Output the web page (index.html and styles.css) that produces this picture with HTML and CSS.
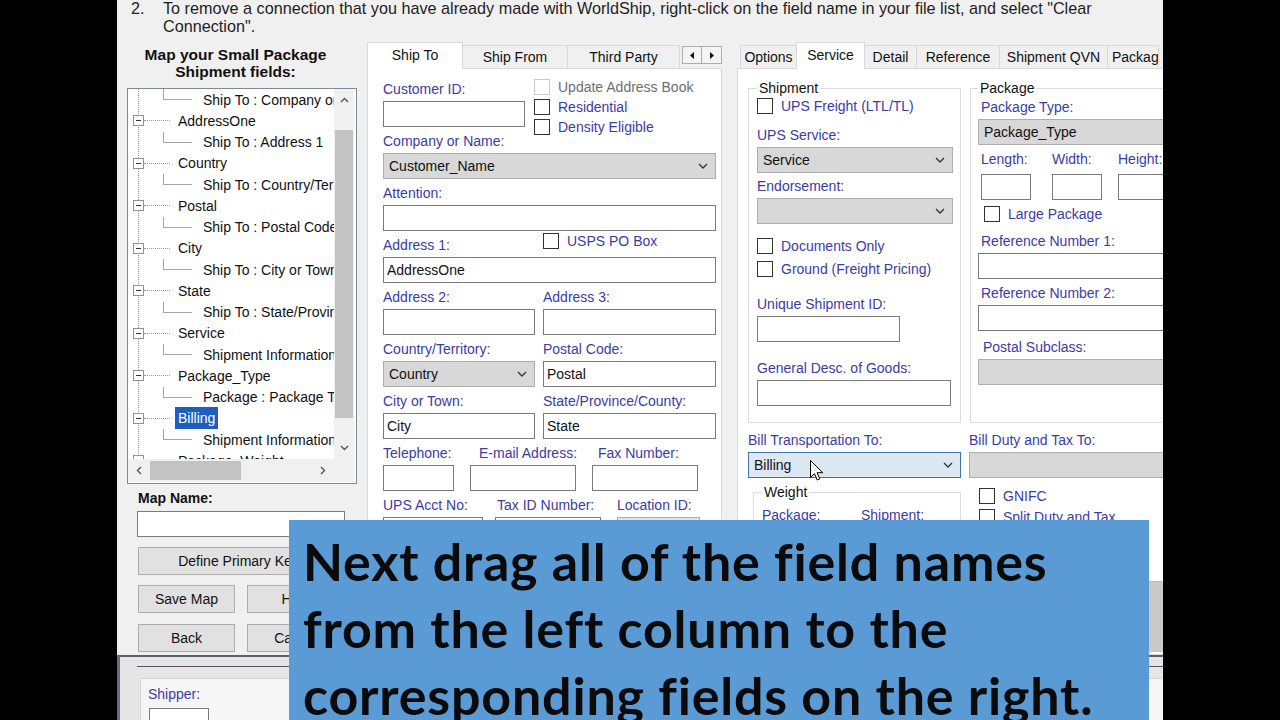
FILE: index.html
```html
<!DOCTYPE html>
<html lang="en">
<head>
    <meta charset="UTF-8">
    <title>WorldShip - Import Map</title>
    <link rel="stylesheet" href="styles.css">
</head>
<body>
<div class="screen">
    <div class="frame">
        <div class="intro">
            <span class="intro-num">2.</span>
            <p class="intro-text">To remove a connection that you have already made with WorldShip, right-click on the field name in your file list, and select "Clear<br>Connection".</p>
        </div>

        <div class="main">
            <!-- left column: source fields tree -->
            <div class="mapper">
                <div class="mapper-title">Map your Small Package<br>Shipment fields:</div>
                <div class="tree">
                    <div class="tree-list">
                        <div class="leaf"><span class="elbow"></span><span class="tree-label">Ship To : Company or Name</span></div>
                        <div class="node"><span class="toggle"></span><span class="branch"></span><span class="tree-label">AddressOne</span></div>
                        <div class="leaf"><span class="elbow"></span><span class="tree-label">Ship To : Address 1</span></div>
                        <div class="node"><span class="toggle"></span><span class="branch"></span><span class="tree-label">Country</span></div>
                        <div class="leaf"><span class="elbow"></span><span class="tree-label">Ship To : Country/Territory</span></div>
                        <div class="node"><span class="toggle"></span><span class="branch"></span><span class="tree-label">Postal</span></div>
                        <div class="leaf"><span class="elbow"></span><span class="tree-label">Ship To : Postal Code</span></div>
                        <div class="node"><span class="toggle"></span><span class="branch"></span><span class="tree-label">City</span></div>
                        <div class="leaf"><span class="elbow"></span><span class="tree-label">Ship To : City or Town</span></div>
                        <div class="node"><span class="toggle"></span><span class="branch"></span><span class="tree-label">State</span></div>
                        <div class="leaf"><span class="elbow"></span><span class="tree-label">Ship To : State/Province/County</span></div>
                        <div class="node"><span class="toggle"></span><span class="branch"></span><span class="tree-label">Service</span></div>
                        <div class="leaf"><span class="elbow"></span><span class="tree-label">Shipment Information : Service</span></div>
                        <div class="node"><span class="toggle"></span><span class="branch"></span><span class="tree-label">Package_Type</span></div>
                        <div class="leaf"><span class="elbow"></span><span class="tree-label">Package : Package Type</span></div>
                        <div class="node"><span class="toggle"></span><span class="branch"></span><span class="tree-label selected">Billing</span></div>
                        <div class="leaf"><span class="elbow"></span><span class="tree-label">Shipment Information : Bill Transportation To</span></div>
                        <div class="node"><span class="toggle"></span><span class="branch"></span><span class="tree-label">Package_Weight</span></div>
                    </div>
                    <div class="vscroll">
                        <span class="sb-arrow"><svg width="9" height="6" viewBox="0 0 9 6"><path d="M1 5l3.5-3.5L8 5" fill="none" stroke="#555" stroke-width="1.4"/></svg></span>
                        <span class="vthumb"></span>
                        <span class="sb-arrow sb-end"><svg width="9" height="6" viewBox="0 0 9 6"><path d="M1 1l3.5 3.5L8 1" fill="none" stroke="#555" stroke-width="1.4"/></svg></span>
                    </div>
                    <div class="hscroll">
                        <span class="sb-arrow"><svg width="6" height="9" viewBox="0 0 6 9"><path d="M5 1L1.5 4.5 5 8" fill="none" stroke="#555" stroke-width="1.4"/></svg></span>
                        <span class="hthumb"></span>
                        <span class="sb-arrow sb-end"><svg width="6" height="9" viewBox="0 0 6 9"><path d="M1 1l3.5 3.5L1 8" fill="none" stroke="#555" stroke-width="1.4"/></svg></span>
                    </div>
                    <div class="corner"></div>
                </div>
                <div class="map-name">Map Name:</div>
                <div class="tb map-input"></div>
                <button class="btn btn-wide">Define Primary Keys</button>
                <div class="btn-row">
                    <button class="btn">Save Map</button>
                    <button class="btn">Help</button>
                </div>
                <div class="btn-row btn-row-last">
                    <button class="btn">Back</button>
                    <button class="btn">Cancel</button>
                </div>
            </div>

            <!-- middle: ship to / ship from -->
            <div class="tabctl ship-tabs">
                <div class="tabstrip">
                    <div class="tab active t-shipto">Ship To</div>
                    <div class="tab t-shipfrom">Ship From</div>
                    <div class="tab t-third">Third Party</div>
                    <div class="tab-arrows">
                        <span class="arrow-btn"><svg width="4" height="7" viewBox="0 0 4 7"><path d="M4 0v7L0 3.5z" fill="#111"/></svg></span>
                        <span class="arrow-btn"><svg width="4" height="7" viewBox="0 0 4 7"><path d="M0 0v7l4-3.5z" fill="#111"/></svg></span>
                    </div>
                </div>
                <div class="tabpage ship-page">
                    <div class="cust-row">
                        <div class="field">
                            <span class="lbl">Customer ID:</span>
                            <div class="tb cust-id"></div>
                        </div>
                        <div class="checklist">
                            <div class="check disabled"><span class="box"></span><span class="txt">Update Address Book</span></div>
                            <div class="check"><span class="box"></span><span class="txt">Residential</span></div>
                            <div class="check"><span class="box"></span><span class="txt">Density Eligible</span></div>
                        </div>
                    </div>
                    <div class="field">
                        <span class="lbl">Company or Name:</span>
                        <div class="combo"><span>Customer_Name</span><svg class="chev" width="10" height="6" viewBox="0 0 10 6"><path d="M1 1l4 4 4-4" fill="none" stroke="#333" stroke-width="1.3"/></svg></div>
                    </div>
                    <div class="field">
                        <span class="lbl">Attention:</span>
                        <div class="tb"></div>
                    </div>
                    <div class="field">
                        <div class="addr1-head">
                            <span class="lbl">Address 1:</span>
                            <div class="check po-box"><span class="box"></span><span class="txt">USPS PO Box</span></div>
                        </div>
                        <div class="tb">AddressOne</div>
                    </div>
                    <div class="pair">
                        <div class="field"><span class="lbl">Address 2:</span><div class="tb"></div></div>
                        <div class="field"><span class="lbl">Address 3:</span><div class="tb"></div></div>
                    </div>
                    <div class="pair">
                        <div class="field">
                            <span class="lbl">Country/Territory:</span>
                            <div class="combo"><span>Country</span><svg class="chev" width="10" height="6" viewBox="0 0 10 6"><path d="M1 1l4 4 4-4" fill="none" stroke="#333" stroke-width="1.3"/></svg></div>
                        </div>
                        <div class="field"><span class="lbl">Postal Code:</span><div class="tb">Postal</div></div>
                    </div>
                    <div class="pair">
                        <div class="field"><span class="lbl">City or Town:</span><div class="tb">City</div></div>
                        <div class="field"><span class="lbl">State/Province/County:</span><div class="tb">State</div></div>
                    </div>
                    <div class="tel-row">
                        <div class="field"><span class="lbl">Telephone:</span><div class="tb w71"></div></div>
                        <div class="field"><span class="lbl pad9">E-mail Address:</span><div class="tb w106"></div></div>
                        <div class="field"><span class="lbl pad6">Fax Number:</span><div class="tb w106"></div></div>
                    </div>
                    <div class="acct-row">
                        <div class="field"><span class="lbl">UPS Acct No:</span><div class="tb w100"></div></div>
                        <div class="field"><span class="lbl pad2">Tax ID Number:</span><div class="tb w106"></div></div>
                        <div class="field"><span class="lbl">Location ID:</span><div class="tb tb-grey w83"></div></div>
                    </div>
                </div>
            </div>

            <!-- right: service options -->
            <div class="tabctl service-tabs">
                <div class="tabstrip strip-right">
                    <div class="tab t-options">Options</div>
                    <div class="tab active t-service">Service</div>
                    <div class="tab t-detail">Detail</div>
                    <div class="tab t-reference">Reference</div>
                    <div class="tab t-qvn">Shipment QVN</div>
                    <div class="tab t-package">Package</div>
                </div>
                <div class="tabpage service-page">
                    <div class="group-row">
                        <fieldset class="group shipment-group">
                            <legend>Shipment</legend>
                            <div class="check"><span class="box"></span><span class="txt">UPS Freight (LTL/TL)</span></div>
                            <span class="lbl sp-ups">UPS Service:</span>
                            <div class="combo w196"><span>Service</span><svg class="chev" width="10" height="6" viewBox="0 0 10 6"><path d="M1 1l4 4 4-4" fill="none" stroke="#333" stroke-width="1.3"/></svg></div>
                            <span class="lbl sp-endorse">Endorsement:</span>
                            <div class="combo w196"><span></span><svg class="chev" width="10" height="6" viewBox="0 0 10 6"><path d="M1 1l4 4 4-4" fill="none" stroke="#333" stroke-width="1.3"/></svg></div>
                            <div class="check check-tall sp-docs"><span class="box"></span><span class="txt">Documents Only</span></div>
                            <div class="check check-tall"><span class="box"></span><span class="txt">Ground (Freight Pricing)</span></div>
                            <span class="lbl sp-unique">Unique Shipment ID:</span>
                            <div class="tb w143"></div>
                            <span class="lbl sp-desc">General Desc. of Goods:</span>
                            <div class="tb w194"></div>
                        </fieldset>
                        <fieldset class="group package-group">
                            <legend>Package</legend>
                            <span class="lbl pad3 sp-ptype">Package Type:</span>
                            <div class="combo"><span>Package_Type</span><svg class="chev" width="10" height="6" viewBox="0 0 10 6"><path d="M1 1l4 4 4-4" fill="none" stroke="#333" stroke-width="1.3"/></svg></div>
                            <div class="dims">
                                <div class="field"><span class="lbl">Length:</span><div class="tb w50"></div></div>
                                <div class="field"><span class="lbl">Width:</span><div class="tb w50"></div></div>
                                <div class="field"><span class="lbl">Height:</span><div class="tb w50"></div></div>
                            </div>
                            <div class="check large-pkg"><span class="box"></span><span class="txt">Large Package</span></div>
                            <span class="lbl pad3 sp-ref1">Reference Number 1:</span>
                            <div class="tb"></div>
                            <span class="lbl pad3 sp-ref2">Reference Number 2:</span>
                            <div class="tb"></div>
                            <span class="lbl pad5 sp-subclass">Postal Subclass:</span>
                            <div class="combo"><span></span><svg class="chev" width="10" height="6" viewBox="0 0 10 6"><path d="M1 1l4 4 4-4" fill="none" stroke="#333" stroke-width="1.3"/></svg></div>
                        </fieldset>
                    </div>
                    <div class="bill-row">
                        <div class="bill-col">
                            <span class="lbl">Bill Transportation To:</span>
                            <div class="combo focus"><span>Billing</span><svg class="chev" width="10" height="6" viewBox="0 0 10 6"><path d="M1 1l4 4 4-4" fill="none" stroke="#333" stroke-width="1.3"/></svg></div>
                            <fieldset class="group weight-group">
                                <legend>Weight</legend>
                                <div class="weight-labels">
                                    <span class="lbl">Package:</span>
                                    <span class="lbl">Shipment:</span>
                                </div>
                            </fieldset>
                        </div>
                        <div class="bill-col">
                            <span class="lbl">Bill Duty and Tax To:</span>
                            <div class="combo"><span></span><svg class="chev" width="10" height="6" viewBox="0 0 10 6"><path d="M1 1l4 4 4-4" fill="none" stroke="#333" stroke-width="1.3"/></svg></div>
                            <div class="duty-checks">
                                <div class="check"><span class="box"></span><span class="txt">GNIFC</span></div>
                                <div class="check"><span class="box"></span><span class="txt">Split Duty and Tax</span></div>
                            </div>
                        </div>
                    </div>
                    <div class="panel-foot"></div>
                </div>
            </div>
        </div>

        <!-- window behind, peeking out at the bottom -->
        <div class="lower">
            <div class="lower-bar"></div>
            <div class="lower-body">
                <span class="lbl">Shipper:</span>
                <div class="tb shipper-input"></div>
            </div>
        </div>
    </div>

    <div class="caption">Next drag all of the field names<br>from the left column to the<br>corresponding fields on the right.</div>

    <svg class="cursor" width="14" height="22" viewBox="0 0 14 22"><path d="M0.5 0.5v17l4-3.9 2.7 6.4 2.6-1.1-2.7-6.2h5.7z" fill="#fff" stroke="#000"/></svg>
</div>
</body>
</html>
```

FILE: styles.css
```css
body {
    margin: 0;
    background: #000;
    font-family: "Liberation Sans", Arial, sans-serif;
    font-size: 14px;
    color: #111;
}

.screen {
    position: relative;
    width: 1280px;
    height: 720px;
    overflow: hidden;
    padding-left: 117px;
    box-sizing: border-box;
}

.frame {
    width: 1046px;
    height: 720px;
    background: #f0f0f0;
    overflow: hidden;
}

/* instruction text */
.intro {
    display: flex;
    height: 36px;
    margin-top: -1px;
    padding-left: 14px;
    font-size: 16.2px;
    line-height: 18px;
    color: #1e1e1e;
}

.intro-num {
    flex: none;
    width: 32px;
}

.intro-text {
    margin: 0;
    white-space: nowrap;
}

.main {
    display: flex;
    height: 613px;
    margin-top: 7px;
}

/* left column */
.mapper {
    flex: none;
    width: 243px;
    padding-left: 10px;
    box-sizing: border-box;
    display: flex;
    flex-direction: column;
    align-items: flex-start;
}

.mapper-title {
    width: 217px;
    margin-top: 4px;
    text-align: center;
    font-weight: bold;
    font-size: 15.5px;
    line-height: 17px;
}

.tree {
    width: 230px;
    height: 396px;
    margin-top: 8px;
    box-sizing: border-box;
    border: 1px solid #828790;
    padding: 0 2px 1px 0;
    background: #fff;
    display: grid;
    grid-template-columns: 1fr 20px;
    grid-template-rows: 1fr 23px;
}

.tree-list {
    overflow: hidden;
    background: repeating-linear-gradient(to bottom, #9a9a9a 0 1px, transparent 1px 2px) 10px 0 / 1px 100% no-repeat;
}

.node,
.leaf {
    display: flex;
    align-items: center;
    height: 21.25px;
    white-space: nowrap;
}

.toggle {
    flex: none;
    width: 11px;
    height: 11px;
    margin-left: 5px;
    box-sizing: border-box;
    border: 1px solid #919191;
    background: #fff;
    display: flex;
    align-items: center;
    justify-content: center;
}

.toggle::before {
    content: "";
    width: 5px;
    height: 1px;
    background: #333;
}

.branch {
    flex: none;
    width: 26px;
    border-top: 1px dotted #9a9a9a;
}

.node .tree-label {
    margin-left: 5px;
}

.elbow {
    flex: none;
    align-self: flex-start;
    width: 29px;
    height: 11px;
    margin-left: 35px;
    box-sizing: border-box;
    border-left: 1px solid #a4a4a4;
    border-bottom: 1px solid #a4a4a4;
}

.leaf .tree-label {
    margin-left: 8px;
}

.tree-label {
    padding: 2px 3px;
    line-height: 18px;
}

.tree-label.selected {
    background: #1c5fc0;
    color: #fff;
}

.vscroll,
.hscroll,
.corner {
    background: #f0f0f0;
}

.vscroll {
    display: flex;
    flex-direction: column;
    align-items: center;
}

.sb-arrow {
    flex: none;
    width: 20px;
    height: 22px;
    display: flex;
    align-items: center;
    justify-content: center;
}

.vthumb {
    width: 18px;
    height: 288px;
    margin-top: 19px;
    background: #c3c3c3;
}

.sb-end {
    margin-top: auto;
}

.hscroll {
    display: flex;
    align-items: center;
}

.hscroll .sb-arrow {
    width: 22px;
    height: 23px;
}

.hthumb {
    width: 91px;
    height: 19px;
    background: #c3c3c3;
}

.hscroll .sb-end {
    margin-top: 0;
    margin-left: auto;
}

.map-name {
    margin: 5px 0 0 11px;
    font-weight: bold;
    line-height: 18px;
}

.map-input {
    width: 208px;
    height: 24px;
    margin: 4px 0 0 10px;
}

.btn {
    height: 28px;
    box-sizing: border-box;
    border: 1px solid #adadad;
    background: #e1e1e1;
    font-family: inherit;
    font-size: 14px;
    color: #111;
    padding: 0;
}

.btn-wide {
    width: 208px;
    margin: 10px 0 0 11px;
}

.btn-row {
    display: grid;
    grid-template-columns: 97px 98px;
    column-gap: 12px;
    margin: 10px 0 0 11px;
}

.btn-row-last {
    margin-top: 11px;
}

/* tab controls */
.tabctl {
    flex: none;
    display: flex;
    flex-direction: column;
}

.ship-tabs {
    width: 355px;
    margin-left: 7px;
}

.service-tabs {
    width: 460px;
    margin-left: 15px;
}

.tabstrip {
    display: flex;
    align-items: flex-end;
    height: 26px;
    flex: none;
}

.strip-right {
    padding-left: 3px;
}

.tab {
    flex: none;
    height: 23px;
    box-sizing: border-box;
    border: 1px solid #d9d9d9;
    border-bottom: none;
    margin-left: -1px;
    background: #f0f0f0;
    text-align: center;
    line-height: 22px;
    white-space: nowrap;
    overflow: hidden;
}

.tab:first-child {
    margin-left: 0;
}

.tab.active {
    height: 27px;
    margin-bottom: -1px;
    background: #fff;
    position: relative;
    z-index: 1;
    line-height: 25px;
}

.t-shipto { width: 96px; }
.t-shipfrom { width: 106px; }
.t-third { width: 113px; }
.t-options { width: 57px; }
.t-service { width: 69px; }
.t-detail { width: 53px; }
.t-reference { width: 84px; }
.t-qvn { width: 109px; }
.t-package { width: 52px; text-align: left; padding-left: 4px; }

.tab-arrows {
    display: flex;
    margin: 0 0 4px 2px;
}

.arrow-btn {
    width: 20px;
    height: 18px;
    box-sizing: border-box;
    border: 1px solid #adadad;
    background: #f4f4f4;
    display: flex;
    align-items: center;
    justify-content: center;
}

.arrow-btn + .arrow-btn {
    border-left: none;
}

.tabpage {
    flex: 1;
    box-sizing: border-box;
    border: 1px solid #d9d9d9;
    background: #fff;
}

.ship-page {
    display: flex;
    flex-direction: column;
    gap: 5px;
    padding: 11px 5px 0 15px;
}

/* form pieces */
.lbl {
    display: block;
    line-height: 18px;
    color: #3b3ba6;
    white-space: nowrap;
}

.field {
    display: flex;
    flex-direction: column;
    gap: 3px;
}

.tb {
    height: 26px;
    box-sizing: border-box;
    border: 1px solid #7a7a7a;
    background: #fff;
    padding-left: 3px;
    line-height: 24px;
    color: #111;
}

.tb-grey {
    background: #e4e4e4;
    border-color: #adadad;
}

.combo {
    height: 26px;
    box-sizing: border-box;
    border: 1px solid #adadad;
    background: #d8d8d8;
    padding: 0 7px 0 5px;
    display: flex;
    align-items: center;
    justify-content: space-between;
    color: #111;
}

.combo.focus {
    background: #dde8f3;
    border-color: #3d77a8;
}

.check {
    display: flex;
    align-items: center;
    gap: 8px;
    height: 20px;
    white-space: nowrap;
}

.check .box {
    flex: none;
    width: 16px;
    height: 16px;
    box-sizing: border-box;
    border: 1px solid #333;
    background: #fff;
}

.check .txt {
    color: #3b3ba6;
}

.check.disabled .box {
    border-color: #c8c8c8;
}

.check.disabled .txt {
    color: #6e6e6e;
}

.cust-row {
    display: grid;
    grid-template-columns: 151px 1fr;
    height: 47px;
    align-items: start;
}

.cust-id {
    width: 142px;
}

.checklist {
    margin-top: -3px;
}

.addr1-head {
    display: grid;
    grid-template-columns: 160px 1fr;
    height: 18px;
}

.po-box {
    margin-top: -5px;
}

.pair {
    display: grid;
    grid-template-columns: 152px 173px;
    column-gap: 8px;
}

.tel-row {
    display: grid;
    grid-template-columns: 87px 122px 106px;
}

.acct-row {
    display: grid;
    grid-template-columns: 112px 122px 83px;
}

.w50 { width: 50px; }
.w71 { width: 71px; }
.w83 { width: 83px; }
.w100 { width: 100px; }
.w106 { width: 106px; }
.w143 { width: 143px; }
.w194 { width: 194px; }
.w196 { width: 196px; }

.pad2 { padding-left: 2px; }
.pad3 { padding-left: 3px; }
.pad5 { padding-left: 5px; }
.pad6 { padding-left: 6px; }
.pad9 { padding-left: 9px; }

/* service page */
.service-page {
    display: flex;
    flex-direction: column;
    padding: 11px 0 0 10px;
}

.group-row {
    display: flex;
    gap: 9px;
}

.group {
    margin: 0;
    border: 1px solid #dcdcdc;
    min-width: 0;
}

.group legend {
    padding: 0 2px;
    line-height: 16px;
    color: #111;
}

.shipment-group {
    flex: none;
    width: 213px;
    box-sizing: border-box;
    padding: 0 3px 16px 8px;
}

.package-group {
    flex: 1;
    padding: 0 0 15px 7px;
}

.sp-ups { margin-top: 10px; }
.sp-endorse { margin-top: 4px; }
.sp-docs { margin-top: 10px; }
.check-tall { height: 23px; }
.sp-unique { margin-top: 15px; }
.sp-desc { margin-top: 17px; }

.service-page .lbl + .tb,
.service-page .lbl + .combo {
    margin-top: 3px;
}

.sp-ptype { margin-top: 2px; }

.dims {
    display: grid;
    grid-template-columns: 71px 66px 60px;
    margin-top: 5px;
    padding-left: 3px;
}

.large-pkg {
    margin-top: 4px;
    padding-left: 6px;
}

.sp-ref1 { margin-top: 8px; }
.sp-ref2 { margin-top: 5px; }
.sp-subclass { margin-top: 7px; }

.bill-row {
    display: grid;
    grid-template-columns: 213px 1fr;
    column-gap: 8px;
    margin-top: 8px;
}

.bill-col {
    display: flex;
    flex-direction: column;
}

.bill-col .combo {
    margin-top: 2px;
}

.weight-group {
    margin: 6px 0 0 5px;
    padding: 0 0 40px 8px;
}

.weight-labels {
    display: grid;
    grid-template-columns: 99px 1fr;
    margin-top: 6px;
}

.duty-checks {
    margin-top: 7px;
    padding-left: 10px;
}

.duty-checks .check {
    height: 21px;
}

.panel-foot {
    margin-top: auto;
    margin-bottom: 2px;
    height: 70px;
    background: #cacaca;
    border-top: 1px solid #b8b8b8;
}

/* window behind */
.lower {
    height: 65px;
    border-top: 2px solid #59626c;
    border-left: 3px solid #6a6f76;
    background: #e6e6e6;
}

.lower-bar {
    height: 9px;
    margin-left: 17px;
    border-bottom: 1px solid #555;
}

.lower-body {
    margin: 11px 0 0 20px;
    padding: 6px 0 0 7px;
    height: 60px;
    border-top: 1px solid #d6d6d6;
    border-left: 1px solid #d6d6d6;
    background: #f6f6f6;
}

.shipper-input {
    width: 60px;
    margin: 5px 0 0 1px;
}

/* caption overlay */
.caption {
    position: absolute;
    left: 289px;
    top: 520px;
    width: 860px;
    height: 200px;
    box-sizing: border-box;
    padding: 8px 0 0 14px;
    background: #5b9bd5;
    font-family: Lato, "Open Sans", sans-serif;
    font-weight: 700;
    font-size: 52px;
    letter-spacing: 0.8px;
    line-height: 67px;
    color: #0a0a0a;
    white-space: nowrap;
}

.cursor {
    position: absolute;
    left: 810px;
    top: 460px;
}
```
